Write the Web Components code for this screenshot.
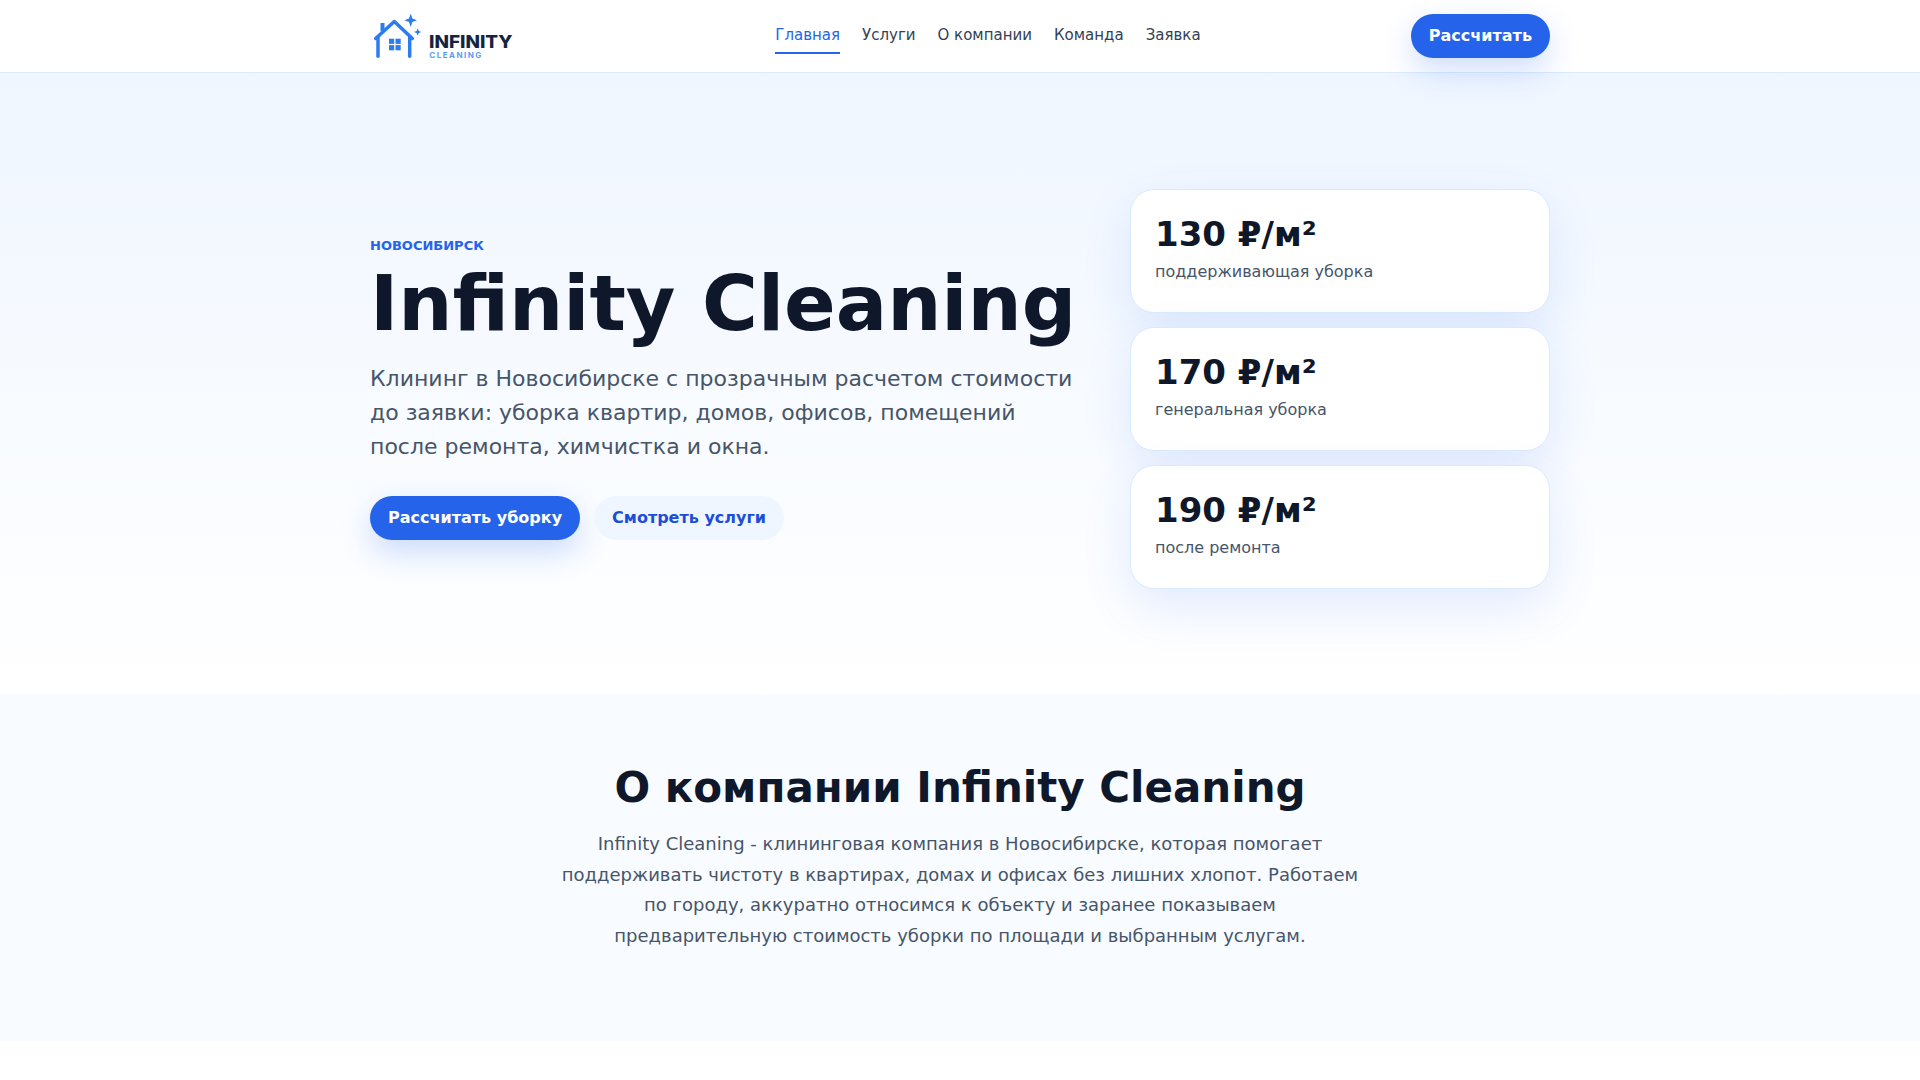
<!DOCTYPE html>
<html lang="ru">
<head>
<meta charset="utf-8">
<title>Infinity Cleaning</title>
<style>
html,body{margin:0;padding:0;background:#fff;font-family:"DejaVu Sans",sans-serif;color:#0f172a}
</style>
</head>
<body>
<site-header></site-header>
<hero-section>
  <price-card price="130 ₽/м²" label="поддерживающая уборка"></price-card>
  <price-card price="170 ₽/м²" label="генеральная уборка"></price-card>
  <price-card price="190 ₽/м²" label="после ремонта"></price-card>
</hero-section>
<about-section></about-section>
<script>
function def(name, html, init){
  customElements.define(name, class extends HTMLElement{
    constructor(){super();this.attachShadow({mode:'open'}).innerHTML=html;}
    connectedCallback(){ if(init) init(this); }
  });
}
def('pill-button',`<style>
:host{display:inline-flex;height:44px;align-items:center;padding:0 18px;border-radius:999px;font:700 16px/1 "DejaVu Sans",sans-serif;white-space:nowrap;box-sizing:border-box;background:#2563eb;color:#fff;box-shadow:0 12px 30px rgba(37,99,235,.22)}
:host([ghost]){background:#eff6ff;color:#1d4ed8;box-shadow:none}
</style><slot></slot>`);
def('nav-link',`<style>
:host{display:block;font:400 15px/1 "DejaVu Sans",sans-serif;color:#334155;padding:10px 0 9px;border-bottom:2px solid transparent}
:host([active]){color:#2563eb;border-bottom-color:#2563eb}
</style><slot></slot>`);
def('brand-logo',`<style>
:host{display:block;width:195px;height:50px;}
svg{display:block}
text{font-family:Inter,"DejaVu Sans",sans-serif}
</style>
<svg width="144" height="50" viewBox="0 0 144 50" fill="none">
  <g stroke="#2b7cf0" stroke-width="3.5" stroke-linecap="round" stroke-linejoin="round">
    <path d="M5.7 27.5 L24.3 10.5 L42.3 27.5"/>
    <path d="M8 26 V45.3"/>
    <path d="M39.7 26 V45.3"/>
  </g>
  <path d="M12.5 12 V20" stroke="#2b7cf0" stroke-width="4"/>
  <g fill="#2b7cf0">
    <rect x="19" y="27.7" width="5.2" height="5.2"/><rect x="25.5" y="27.7" width="5.2" height="5.2"/>
    <rect x="19" y="34.1" width="5.2" height="5.2"/><rect x="25.5" y="34.1" width="5.2" height="5.2"/>
    <path d="M40.7 2.6 L42.4 7.6 L47 9.3 L42.4 11 L40.7 16 L39 11 L34.4 9.3 L39 7.6Z"/>
    <path d="M47.7 17.3 L48.8 19.9 L51.4 21 L48.8 22.1 L47.7 24.7 L46.6 22.1 L44 21 L46.6 19.9Z"/>
  </g>
  <text x="59" y="37" font-size="17" font-weight="800" fill="#14233f" textLength="83.5" lengthAdjust="spacingAndGlyphs">INFINITY</text>
  <text x="59.3" y="46.7" font-size="8" font-weight="700" fill="#5b9bf2" textLength="52">CLEANING</text>
</svg>`);
def('site-header',`<style>
:host{display:block;background:#fff;border-bottom:1px solid #dbeafe;box-sizing:border-box;height:73px}
.in{width:1180px;margin:0 auto;height:72px;display:flex;align-items:center;justify-content:space-between}
nav{display:flex;gap:22px;align-items:flex-start}
</style><div class="in">
<brand-logo></brand-logo>
<nav><nav-link active>Главная</nav-link><nav-link>Услуги</nav-link><nav-link>О компании</nav-link><nav-link>Команда</nav-link><nav-link>Заявка</nav-link></nav>
<pill-button>Рассчитать</pill-button>
</div>`);
def('hero-section',`<style>
:host{display:block;background:linear-gradient(180deg,#eff6ff 0%,#fff 100%);height:621px;box-sizing:border-box;padding-top:116px}
.in{width:1180px;margin:0 auto;display:grid;grid-template-columns:1fr 420px;gap:48px;align-items:center}
.eb{font:700 13px/16px "DejaVu Sans",sans-serif;color:#2563eb;text-transform:uppercase}
h1{margin:8px 0 0;font:700 76.2px/84px "DejaVu Sans",sans-serif;color:#0f172a;white-space:nowrap}
p{margin:16px 0 0;font:400 22px/34px "DejaVu Sans",sans-serif;color:#475569}
.acts{display:flex;gap:14px;margin-top:32px}
.cards{display:flex;flex-direction:column;gap:14px}
</style><div class="in"><div>
<div class="eb">Новосибирск</div>
<h1>Infinity Cleaning</h1>
<p>Клининг в Новосибирске с прозрачным расчетом стоимости до заявки: уборка квартир, домов, офисов, помещений после ремонта, химчистка и окна.</p>
<div class="acts"><pill-button>Рассчитать уборку</pill-button><pill-button ghost>Смотреть услуги</pill-button></div>
</div><div class="cards"><slot></slot></div></div>`);
def('price-card',`<style>
:host{display:block;background:#fff;border:1px solid #dbeafe;border-radius:24px;box-sizing:border-box;height:124px;padding:25px 24px;box-shadow:0 18px 50px rgba(37,99,235,.12)}
.p{font:700 34px/38px "DejaVu Sans",sans-serif;color:#0f172a}
.l{margin-top:7px;font:400 16px/24px "DejaVu Sans",sans-serif;color:#475569}
</style><div class="p"></div><div class="l"></div>`, el=>{
  el.shadowRoot.querySelector('.p').textContent=el.getAttribute('price');
  el.shadowRoot.querySelector('.l').textContent=el.getAttribute('label');
});
def('about-section',`<style>
:host{display:block;background:#f8fbff;height:347px;box-sizing:border-box;padding-top:69px;text-align:center}
h2{margin:0;font:700 42px/50px "DejaVu Sans",sans-serif;color:#0f172a}
p{margin:16px auto 0;width:800px;font:400 18px/30.6px "DejaVu Sans",sans-serif;color:#475569}
</style><h2>О компании Infinity Cleaning</h2>
<p>Infinity Cleaning - клининговая компания в Новосибирске, которая помогает поддерживать чистоту в квартирах, домах и офисах без лишних хлопот. Работаем по городу, аккуратно относимся к объекту и заранее показываем предварительную стоимость уборки по площади и выбранным услугам.</p>`);
</script>
</body>
</html>
